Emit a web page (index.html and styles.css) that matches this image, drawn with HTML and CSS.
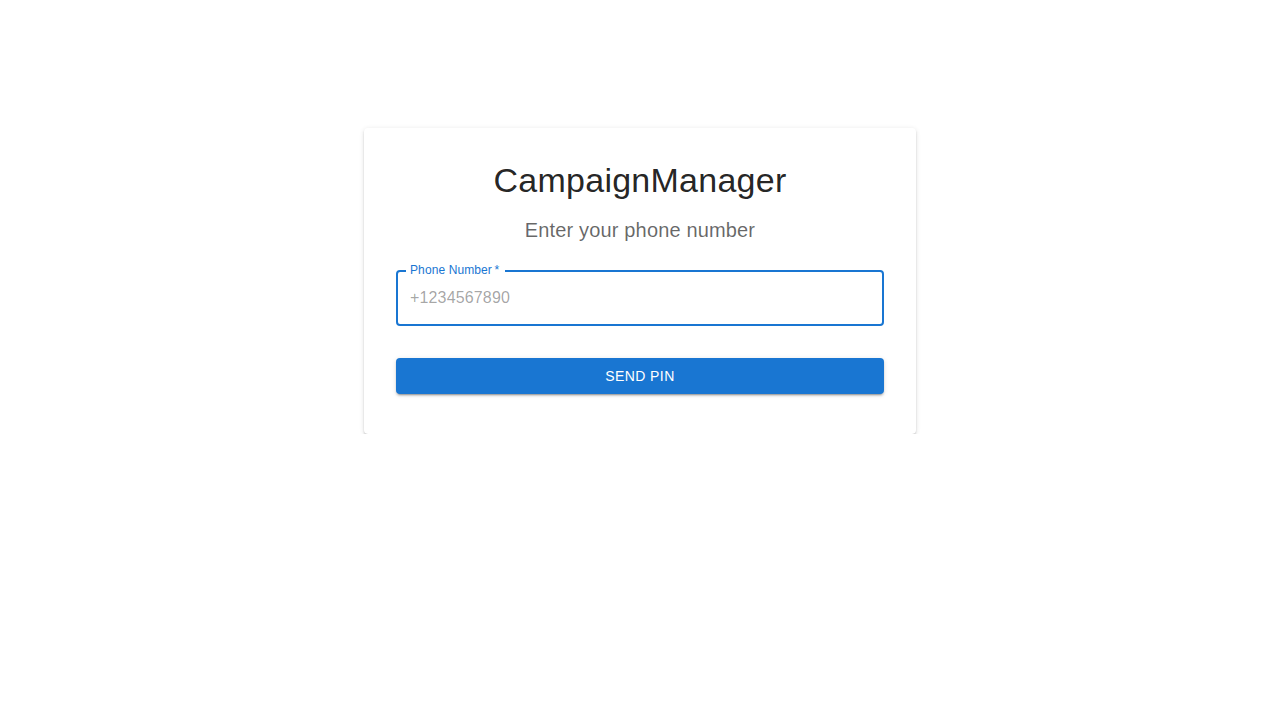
FILE: index.html
```html
<!DOCTYPE html>
<html lang="en">
<head>
<meta charset="utf-8">
<title>CampaignManager</title>
<link rel="stylesheet" href="styles.css">
</head>
<body>
<main class="container">
  <div class="card">
    <h1 class="title">CampaignManager</h1>
    <h2 class="subtitle">Enter your phone number</h2>
    <div class="field">
      <input class="field-input" type="tel" placeholder="+1234567890">
      <label class="field-label">Phone Number&thinsp;*</label>
    </div>
    <button class="btn" type="button">Send PIN</button>
  </div>
</main>
</body>
</html>
```
FILE: styles.css
```css
html, body {
  margin: 0;
  padding: 0;
  background: #fff;
  font-family: "Liberation Sans", Arial, Helvetica, sans-serif;
}
.container {
  max-width: 600px;
  margin: 128px auto 0;
  padding: 0 24px;
  box-sizing: border-box;
}
.card {
  background: #fff;
  border-radius: 4px;
  padding: 31px 32px 32px;
  display: flex;
  flex-direction: column;
  box-shadow: 0px 3px 1px -2px rgba(0,0,0,0.2), 0px 2px 2px 0px rgba(0,0,0,0.14), 0px 1px 5px 0px rgba(0,0,0,0.12);
}
.title {
  margin: 0 0 13px;
  font-size: 34px;
  line-height: 42px;
  font-weight: 400;
  letter-spacing: 0.25px;
  text-align: center;
  color: rgba(0,0,0,0.87);
}
.subtitle {
  margin: 0 0 24px;
  font-size: 20px;
  line-height: 32px;
  font-weight: 400;
  letter-spacing: 0.15px;
  text-align: center;
  color: rgba(0,0,0,0.6);
}
.field {
  position: relative;
  margin-bottom: 32px;
}
.field-input {
  display: block;
  width: 100%;
  box-sizing: border-box;
  height: 56px;
  margin: 0;
  padding: 0 12px;
  border: 2px solid #1976d2;
  border-radius: 4px;
  outline: none;
  font-family: inherit;
  font-size: 16px;
  letter-spacing: 0.15px;
  color: rgba(0,0,0,0.87);
  background: #fff;
}
.field-input::placeholder {
  color: rgba(0,0,0,0.37);
  opacity: 1;
}
.field-label {
  position: absolute;
  top: -7px;
  left: 10px;
  padding: 0 6px 0 4px;
  background: #fff;
  font-size: 12px;
  line-height: 14px;
  letter-spacing: 0.1px;
  color: #1976d2;
}
.btn {
  display: block;
  width: 100%;
  height: 36px;
  margin: 0 0 8px;
  border: none;
  border-radius: 4px;
  background: #1976d2;
  color: #fff;
  font-family: inherit;
  font-size: 14px;
  font-weight: 500;
  letter-spacing: 0.4px;
  text-transform: uppercase;
  cursor: pointer;
  box-shadow: 0px 3px 1px -2px rgba(0,0,0,0.2), 0px 2px 2px 0px rgba(0,0,0,0.14), 0px 1px 5px 0px rgba(0,0,0,0.12);
}
```
